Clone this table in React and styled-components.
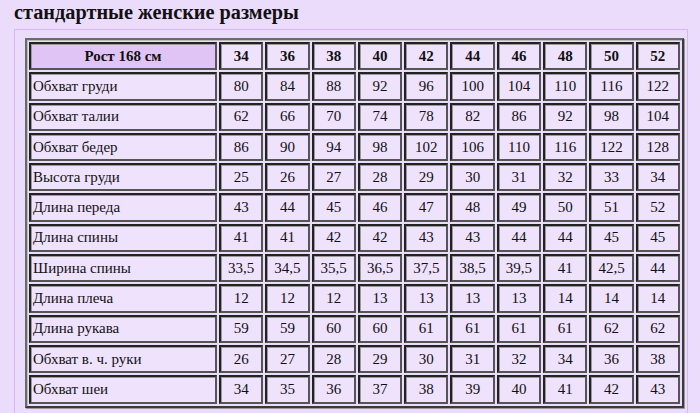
import React from "react";
import styled, { createGlobalStyle } from "styled-components";

const Global = createGlobalStyle`
  html, body {
    margin: 0;
    padding: 0;
    background: #ecdcfc;
  }
  body {
    font-family: "Liberation Serif", "Times New Roman", serif;
    color: #111;
  }
`;

const Page = styled.div`
  padding: 0 0 0 14px;
  width: 674px;
`;

const Title = styled.h2`
  margin: 0 0 4px 0;
  font-family: "Liberation Serif", "Times New Roman", serif;
  font-size: 20.3px;
  line-height: 25px;
  font-weight: bold;
  color: #111;
`;

const Frame = styled.div`
  border: 1px solid #d9b6f3;
  padding: 8px 0 20px 10px;
  background: #ecdcfc;
`;

const Table = styled.table`
  width: 659px;
  border-collapse: separate;
  border-spacing: 2px;
  border: 2px solid;
  border-color: #6a6a6a #3a3a3a #3a3a3a #6a6a6a;
  box-shadow: 1px 1px 0 #9a9a9a, inset 1px 1px 0 #bbb;
  table-layout: fixed;
`;

const Cell = styled.td`
  height: 24.3px;
  padding: 0 4px 0 ${(p) => (p.$left ? "2px" : "4px")};
  border: 2px solid;
  border-color: #222 #555 #555 #222;
  box-shadow: inset 1px 1px 0 #9a9a9a;
  background: ${(p) => (p.$head ? "#e1c4f6" : "#efe2fd")};
  font-family: "Liberation Serif", "Times New Roman", serif;
  font-size: 15px;
  font-weight: ${(p) => (p.$bold ? "bold" : "normal")};
  text-align: ${(p) => (p.$left ? "left" : "center")};
  width: ${(p) => (p.$wide ? "176px" : "auto")};
  white-space: nowrap;
`;

const sizes = ["34", "36", "38", "40", "42", "44", "46", "48", "50", "52"];

const rows = [
  ["Обхват груди", "80", "84", "88", "92", "96", "100", "104", "110", "116", "122"],
  ["Обхват талии", "62", "66", "70", "74", "78", "82", "86", "92", "98", "104"],
  ["Обхват бедер", "86", "90", "94", "98", "102", "106", "110", "116", "122", "128"],
  ["Высота груди", "25", "26", "27", "28", "29", "30", "31", "32", "33", "34"],
  ["Длина переда", "43", "44", "45", "46", "47", "48", "49", "50", "51", "52"],
  ["Длина спины", "41", "41", "42", "42", "43", "43", "44", "44", "45", "45"],
  ["Ширина спины", "33,5", "34,5", "35,5", "36,5", "37,5", "38,5", "39,5", "41", "42,5", "44"],
  ["Длина плеча", "12", "12", "12", "13", "13", "13", "13", "14", "14", "14"],
  ["Длина рукава", "59", "59", "60", "60", "61", "61", "61", "61", "62", "62"],
  ["Обхват в. ч. руки", "26", "27", "28", "29", "30", "31", "32", "34", "36", "38"],
  ["Обхват шеи", "34", "35", "36", "37", "38", "39", "40", "41", "42", "43"],
];

export default function App() {
  return (
    <Page>
      <Global />
      <Title>стандартные женские размеры</Title>
      <Frame>
        <Table>
          <tbody>
            <tr>
              <Cell $head $bold $wide>Рост 168 см</Cell>
              {sizes.map((s) => (
                <Cell key={s} $bold>{s}</Cell>
              ))}
            </tr>
            {rows.map(([name, ...vals]) => (
              <tr key={name}>
                <Cell $left>{name}</Cell>
                {vals.map((v, i) => (
                  <Cell key={i}>{v}</Cell>
                ))}
              </tr>
            ))}
          </tbody>
        </Table>
      </Frame>
    </Page>
  );
}
